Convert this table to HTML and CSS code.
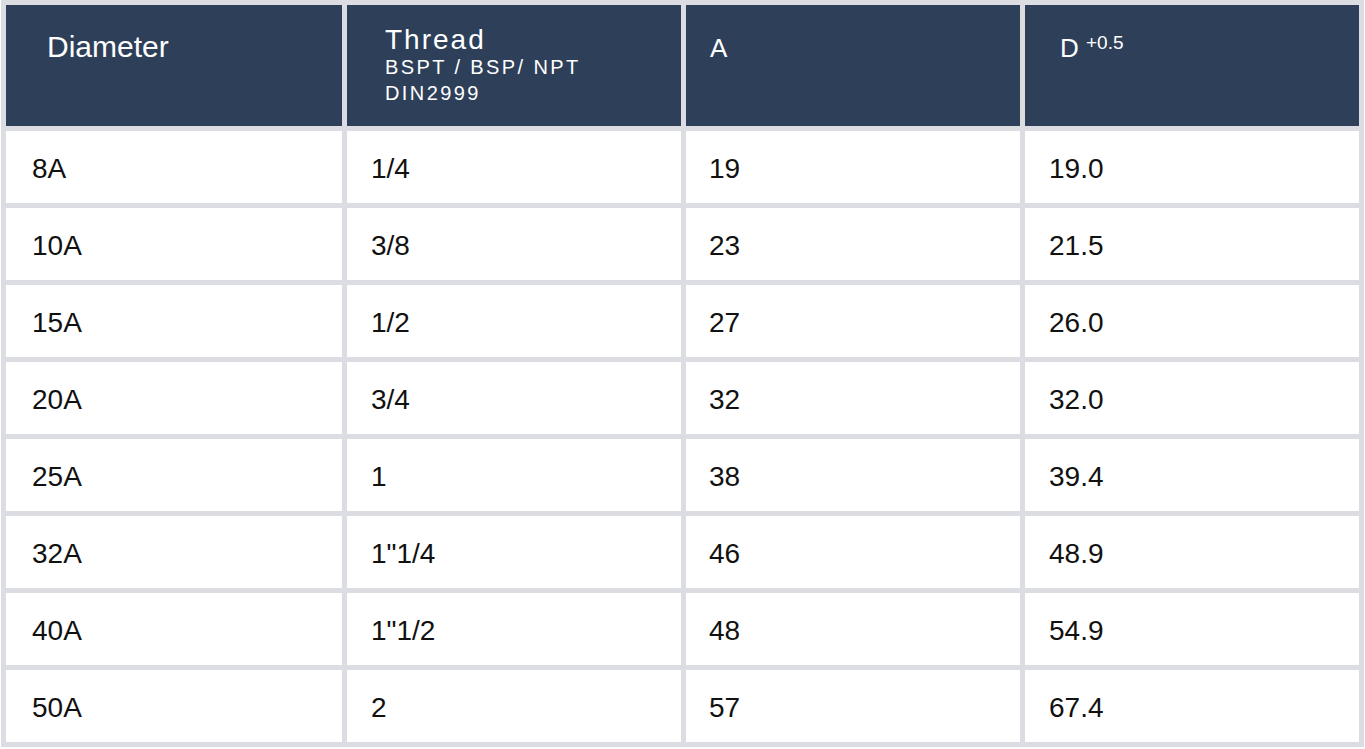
FILE: index.html
```html
<!DOCTYPE html>
<html lang="en">
<head>
<meta charset="utf-8">
<title>Thread dimensions</title>
<link rel="stylesheet" href="styles.css">
</head>
<body>
<table class="spec">
  <colgroup>
    <col class="c1"><col class="c2"><col class="c3"><col class="c4">
  </colgroup>
  <thead>
    <tr class="head">
      <th class="h-diam">Diameter</th>
      <th class="h-thread"><span class="t-main">Thread</span><span class="t-sub">BSPT / BSP/ NPT<br>DIN2999</span></th>
      <th class="h-a">A</th>
      <th class="h-d">D <sup class="tol">+0.5</sup></th>
    </tr>
  </thead>
  <tbody>
    <tr><td class="k1">8A</td><td class="k2">1/4</td><td class="k3">19</td><td class="k4">19.0</td></tr>
    <tr><td class="k1">10A</td><td class="k2">3/8</td><td class="k3">23</td><td class="k4">21.5</td></tr>
    <tr><td class="k1">15A</td><td class="k2">1/2</td><td class="k3">27</td><td class="k4">26.0</td></tr>
    <tr><td class="k1">20A</td><td class="k2">3/4</td><td class="k3">32</td><td class="k4">32.0</td></tr>
    <tr><td class="k1">25A</td><td class="k2">1</td><td class="k3">38</td><td class="k4">39.4</td></tr>
    <tr><td class="k1">32A</td><td class="k2">1"1/4</td><td class="k3">46</td><td class="k4">48.9</td></tr>
    <tr><td class="k1">40A</td><td class="k2">1"1/2</td><td class="k3">48</td><td class="k4">54.9</td></tr>
    <tr><td class="k1">50A</td><td class="k2">2</td><td class="k3">57</td><td class="k4">67.4</td></tr>
  </tbody>
</table>
</body>
</html>
```

FILE: styles.css
```css
html, body {
  margin: 0;
  padding: 0;
  background: #ffffff;
}

body {
  font-family: "Liberation Sans", Arial, sans-serif;
  color: #111111;
}

.spec {
  margin: 0 0 0 1px;
  width: 1363px;
  table-layout: fixed;
  border-collapse: separate;
  border-spacing: 5px;
  background: #dcdde2;
}

.c1 { width: 336px; }
.c2, .c3, .c4 { width: 334px; }

.head th {
  height: 121px;
  padding: 0;
  background: #2e4059;
  color: #ffffff;
  font-weight: normal;
  text-align: left;
  vertical-align: top;
  box-sizing: border-box;
}

.h-diam {
  font-size: 30px;
  line-height: 34px;
  padding: 25px 0 0 41px !important;
}

.h-thread {
  padding: 23px 0 0 38px !important;
}

.t-main {
  display: block;
  font-size: 28px;
  line-height: 24px;
  letter-spacing: 2px;
}

.t-sub {
  display: block;
  margin-top: 2px;
  font-size: 20px;
  line-height: 26px;
  letter-spacing: 2.4px;
}

.h-a {
  font-size: 26px;
  line-height: 30px;
  padding: 28px 0 0 24px !important;
}

.h-d {
  font-size: 26px;
  line-height: 30px;
  padding: 28px 0 0 35px !important;
}

.tol {
  font-size: 19px;
  vertical-align: 8px;
  line-height: 0;
}

tbody td {
  height: 72px;
  padding: 3px 0 0 0;
  background: #ffffff;
  font-size: 28px;
  line-height: 32px;
  vertical-align: middle;
  box-sizing: border-box;
}

.k1 { padding-left: 26px !important; }
.k2 { padding-left: 24px !important; }
.k3 { padding-left: 23px !important; }
.k4 { padding-left: 24px !important; }
```
